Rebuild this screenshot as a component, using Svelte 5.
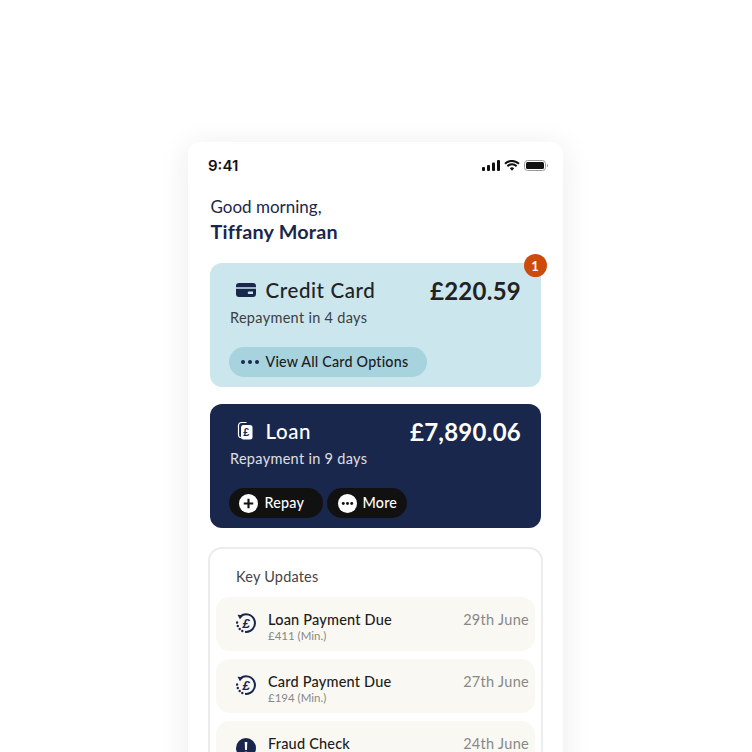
<script>
  const updates = [
    { title: 'Loan Payment Due', sub: '£411 (Min.)', date: '29th June', kind: 'due' },
    { title: 'Card Payment Due', sub: '£194 (Min.)', date: '27th June', kind: 'due' },
    { title: 'Fraud Check', sub: '', date: '24th June', kind: 'alert' }
  ];
</script>

<div class="stage">
  <main class="phone">
    <header class="status">
      <span class="time">9:41</span>
      <span class="status-icons">
        <svg width="18" height="11" viewBox="0 0 18 11" fill="#111"><rect x="0" y="7" width="3" height="4" rx="1"/><rect x="5" y="5" width="3" height="6" rx="1"/><rect x="10" y="2.500" width="3" height="8.500" rx="1"/><rect x="15" y="0" width="3" height="11" rx="1"/></svg>
        <svg width="16" height="11" viewBox="0 0 16 11"><path d="M1 3.800a10 10 0 0 1 14 0M3.400 6.200a6.600 6.600 0 0 1 9.200 0" fill="none" stroke="#111" stroke-width="2"/><path d="M5.800 8.200a3.200 3.200 0 0 1 4.400 0L8 10.800z" fill="#111"/></svg>
        <svg width="24" height="11" viewBox="0 0 24 11"><rect x=".5" y=".5" width="21" height="10" rx="3" fill="none" stroke="#999"/><rect x="2" y="2" width="18" height="7" rx="1.500" fill="#111"/><path d="M23 4v3a1.600 1.600 0 0 0 0-3z" fill="#999"/></svg>
      </span>
    </header>

    <section class="greeting">
      <p class="hello">Good morning,</p>
      <h1>Tiffany Moran</h1>
    </section>

    <section class="card credit">
      <span class="badge">1</span>
      <div class="card-top">
        <span class="card-name">
          <svg class="card-icon" width="20" height="14" viewBox="0 0 20 14"><path d="M0 4.200V3a3 3 0 0 1 3-3h14a3 3 0 0 1 3 3v1.200zM0 5.800h20V11a3 3 0 0 1-3 3H3a3 3 0 0 1-3-3zM13 8.500a1.300 1.300 0 0 0 0 2.600h4V8.500z" fill="#1a274d" fill-rule="evenodd"/></svg>
          Credit Card
        </span>
        <strong class="amount">£220.59</strong>
      </div>
      <p class="repay">Repayment in 4 days</p>
      <div class="actions">
        <button class="pill light">
          <svg width="18" height="4" viewBox="0 0 18 4" fill="#1a274d"><circle cx="2" cy="2" r="2"/><circle cx="9" cy="2" r="2"/><circle cx="16" cy="2" r="2"/></svg>
          <span class="label">View All Card Options</span>
        </button>
      </div>
    </section>

    <section class="card loan">
      <div class="card-top">
        <span class="card-name">
          <svg class="card-icon" width="20" height="20" viewBox="0 0 20 20"><path d="M5 16.500a2.500 2.500 0 0 1-2.500-2.500V4.500A3 3 0 0 1 5.500 1.500h5" fill="none" stroke="#fff" stroke-width="1.200"/><rect x="5" y="4" width="11.500" height="14.500" rx="2.500" fill="#fff"/><text x="10.700" y="15" class="pound">£</text></svg>
          Loan
        </span>
        <strong class="amount">£7,890.06</strong>
      </div>
      <p class="repay">Repayment in 9 days</p>
      <div class="actions">
        <button class="pill dark repay-btn">
          <svg width="19" height="19" viewBox="0 0 18 18"><circle cx="9" cy="9" r="9" fill="#fff"/><path d="M9 4.500v9M4.500 9h9" stroke="#111" stroke-width="2"/></svg>
          <span class="label">Repay</span>
        </button>
        <button class="pill dark more-btn">
          <svg width="19" height="19" viewBox="0 0 18 18"><circle cx="9" cy="9" r="9" fill="#fff"/><g fill="#111"><circle cx="5" cy="9" r="1.400"/><circle cx="9" cy="9" r="1.400"/><circle cx="13" cy="9" r="1.400"/></g></svg>
          <span class="label">More</span>
        </button>
      </div>
    </section>

    <section class="updates">
      <h2>Key Updates</h2>
      <ul>
        {#each updates as u}
          <li>
            {#if u.kind === 'due'}
              <svg class="u-icon" width="20" height="20" viewBox="0 0 20 20">
                <path d="M4.500 3.300A8.800 8.800 0 1 1 9 18.800" fill="none" stroke="#1a274d" stroke-width="2"/>
                <path d="M1.500 1.800l6 .4-3.600 4.100z" fill="#1a274d"/>
                <path d="M1.100 9.500v.1M1.800 13v.1M3.700 16v.1M6.300 18v.1" stroke="#1a274d" stroke-width="2.400" stroke-linecap="round" fill="none"/>
                <text x="10" y="14.500" class="pound due">£</text>
              </svg>
            {:else}
              <svg class="u-icon alert" width="20" height="20" viewBox="0 0 20 20"><circle cx="10" cy="10" r="10" fill="#1a274d"/><path d="M8.700 4h2.600l-.4 8H9.100z" fill="#fff"/><circle cx="10" cy="15" r="1.500" fill="#fff"/></svg>
            {/if}
            <div class="u-text">
              <span class="u-title">{u.title}</span>
              {#if u.sub}<span class="u-sub">{u.sub}</span>{/if}
            </div>
            <span class="u-date">{u.date}</span>
          </li>
        {/each}
      </ul>
    </section>
  </main>
</div>

<style>
  :global(body) {
    margin: 0;
    background: #fff;
    overflow: hidden;
  }
  .stage {
    height: 752px;
    overflow: hidden;
    padding: 142px 0 0 188px;
    box-sizing: border-box;
    font-family: "Lato", "Open Sans", sans-serif;
  }
  .phone {
    width: 375px;
    min-height: 760px;
    background: #fff;
    border-radius: 12px;
    box-shadow: 0 4px 30px rgba(30, 30, 50, 0.09);
    box-sizing: border-box;
  }
  .status {
    display: flex;
    justify-content: space-between;
    align-items: center;
    height: 46px;
    padding: 0 15px 0 20px;
  }
  .time {
    font-family: "Inter", sans-serif;
    font-size: 15px;
    font-weight: 600;
    color: #111;
  }
  .status-icons {
    display: flex;
    align-items: center;
    gap: 4px;
  }
  .status-icons svg { display: block; }
  .greeting {
    padding: 8px 22.500px 0;
    height: 75px;
    box-sizing: border-box;
    color: #1a274d;
  }
  .hello {
    margin: 0;
    font-size: 17px;
    line-height: 22px;
  }
  h1 {
    margin: 0;
    font-size: 19.800px;
    line-height: 26px;
    font-weight: 700;
    letter-spacing: 0.2px;
  }
  .card {
    position: relative;
    width: 330.500px;
    height: 124px;
    margin: 0 0 17px 22px;
    border-radius: 12px;
    padding: 11px 19.500px 10px 19px;
    box-sizing: border-box;
    display: flex;
    flex-direction: column;
  }
  .credit { background: #cbe6ed; color: #222; }
  .loan { background: #1a274d; color: #fff; }
  .badge {
    position: absolute;
    top: -9px;
    right: -6px;
    width: 23px;
    height: 23px;
    border-radius: 50%;
    background: #cc4a0b;
    color: #fff;
    font-size: 13px;
    font-weight: 700;
    display: flex;
    align-items: center;
    justify-content: center;
  }
  .card-top {
    display: flex;
    justify-content: space-between;
    align-items: center;
    height: 32px;
  }
  .card-name {
    display: flex;
    align-items: center;
    gap: 10px;
    padding-left: 6.500px;
    font-size: 20.500px;
    font-weight: 500;
    letter-spacing: 0.6px;
  }
  .card-icon { display: block; }
  .amount {
    font-size: 24px;
    font-weight: 700;
    letter-spacing: 0.25px;
  }
  .repay {
    margin: 2px 0 0 1px;
    font-size: 14.500px;
    line-height: 20px;
    letter-spacing: 0.3px;
    opacity: 0.85;
  }
  .actions {
    display: flex;
    gap: 4px;
    margin-top: auto;
    margin-left: -0.500px;
  }
  .pill {
    display: flex;
    align-items: center;
    height: 30px;
    border: 0;
    border-radius: 15px;
    font-family: inherit;
    font-size: 14.300px;
    font-weight: 500;
    letter-spacing: 0.2px;
    box-sizing: border-box;
  }
  .label { margin-bottom: 2px; }
  .pill.light {
    width: 198px;
    padding: 0 0 0 12px;
    gap: 7px;
    background: #a7d3df;
    color: #1c1c1c;
  }
  .pill.dark {
    background: #111;
    color: #fff;
  }
  .repay-btn {
    width: 94px;
    padding: 0 0 0 10px;
    gap: 7px;
  }
  .more-btn {
    width: 80px;
    padding: 0 0 0 11px;
    gap: 6px;
  }
  .pound {
    font-family: "Liberation Sans", sans-serif;
    font-size: 11px;
    font-weight: 700;
    text-anchor: middle;
    fill: #1a274d;
  }
  .pound.due { font-size: 13px; font-style: italic; }
  .updates {
    width: 335px;
    margin-left: 20px;
    margin-top: 19px;
    border: 2px solid #ececec;
    border-radius: 14px;
    padding: 0 6px 14px;
    box-sizing: border-box;
  }
  h2 {
    margin: 0;
    padding: 19px 0 11px 20px;
    font-size: 14.500px;
    line-height: 18px;
    font-weight: 400;
    letter-spacing: 0.2px;
    color: #444;
  }
  ul {
    list-style: none;
    margin: 0;
    padding: 0;
    display: flex;
    flex-direction: column;
    gap: 8px;
  }
  li {
    display: flex;
    align-items: flex-start;
    height: 54px;
    padding: 14px 6px 0 20px;
    background: #f9f8f3;
    border-radius: 14px;
    box-sizing: border-box;
  }
  .u-icon { display: block; margin-top: 2px; flex: none; }
  .u-icon.alert { margin-top: 3px; }
  .u-text {
    flex: 1;
    display: flex;
    flex-direction: column;
    margin-left: 12px;
  }
  .u-title {
    font-size: 14.500px;
    line-height: 18px;
    font-weight: 500;
    letter-spacing: 0.2px;
    color: #1c1c1c;
  }
  .u-sub {
    font-size: 11.500px;
    line-height: 13px;
    color: #888;
  }
  .u-date {
    font-size: 14.500px;
    line-height: 18px;
    letter-spacing: 0.3px;
    color: #888;
  }
</style>
